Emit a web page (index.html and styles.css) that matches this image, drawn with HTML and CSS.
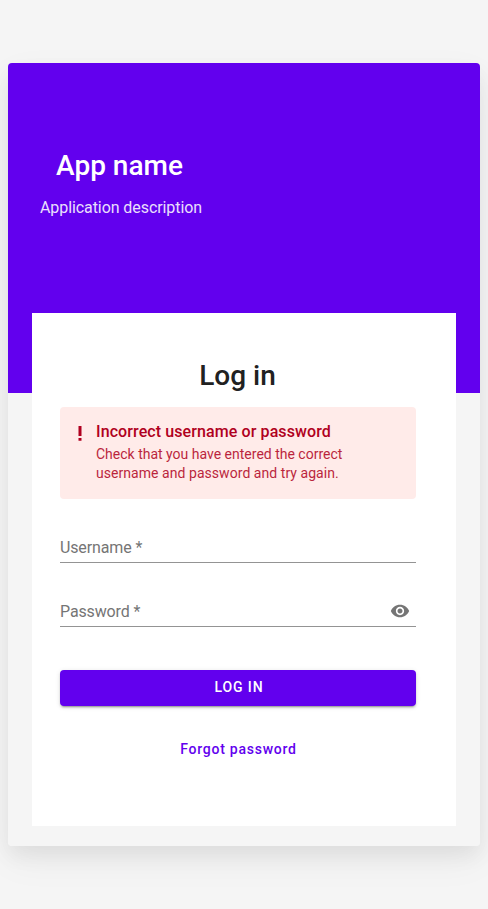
FILE: index.html
```html
<!DOCTYPE html>
<html lang="en">
<head>
<meta charset="utf-8">
<title>Log in</title>
<link rel="stylesheet" href="styles.css">
</head>
<body>
<main class="card">
  <header class="brand">
    <h1 class="brand-name">App name</h1>
    <p class="brand-text">Application description</p>
  </header>
  <form class="panel">
    <h2 class="title">Log in</h2>
    <div class="alert">
      <svg class="alert-icon" viewBox="0 0 20 20"><path d="M8.500 2h3v10h-3zM8.500 14h3v2.700h-3z"/></svg>
      <div>
        <div class="alert-title">Incorrect username or password</div>
        <div class="alert-text">Check that you have entered the correct<br><span class="alert-line">username and password and try again.</span></div>
      </div>
    </div>
    <div class="field"><span>Username *</span></div>
    <div class="field"><span>Password *</span>
      <svg class="eye" viewBox="0 0 24 24"><path d="M12 4.500C7 4.500 2.730 7.610 1 12c1.730 4.390 6 7.500 11 7.500s9.270-3.110 11-7.500c-1.730-4.390-6-7.500-11-7.500zM12 17c-2.760 0-5-2.240-5-5s2.240-5 5-5 5 2.240 5 5-2.240 5-5 5zm0-8c-1.660 0-3 1.340-3 3s1.340 3 3 3 3-1.340 3-3-1.340-3-3-3z"/></svg>
    </div>
    <button class="submit" type="button">LOG IN</button>
    <a class="forgot">Forgot password</a>
  </form>
</main>
</body>
</html>
```
FILE: styles.css
```css
* { box-sizing: border-box; }
body {
  margin: 0;
  height: 909px;
  overflow: hidden;
  padding: 63px 8px;
  background: #f5f5f5;
  font-family: Roboto, sans-serif;
}
.card {
  height: 783px;
  border-radius: 4px;
  background: linear-gradient(#6200ee 330px, #f5f5f5 330px);
  box-shadow: 0 10px 20px rgba(0,0,0,.06), 0 14px 38px rgba(0,0,0,.05);
}
.brand { height: 250px; padding: 86px 32px 0; color: #fff; }
.brand-name {
  width: 159px;
  margin: 0;
  text-align: center;
  font-size: 28px;
  line-height: 34px;
  font-weight: 500;
}
.brand-text { margin: 13px 0 0; font-size: 16px; line-height: 24px; letter-spacing: -.08px; opacity: .87; }
.panel {
  display: flex;
  flex-direction: column;
  height: 513px;
  margin: 0 24px;
  padding: 45px 40px 0 28px;
  background: #fff;
}
.title {
  margin: 0 1px 13px 0;
  text-align: center;
  font-size: 28px;
  line-height: 36px;
  font-weight: 500;
  color: #212121;
}
.alert {
  display: flex;
  gap: 6px;
  height: 92px;
  padding: 15px 20px 0 10px;
  border-radius: 4px;
  background: #ffebe9;
  color: #b00020;
}
.alert-icon { flex: none; width: 20px; height: 20px; margin-top: 2px; fill: currentColor; }
.alert-title { font-size: 16px; line-height: 20px; font-weight: 500; letter-spacing: .1px; }
.alert-text { margin-top: 3px; font-size: 14px; line-height: 19px; opacity: .85; }
.alert-line { letter-spacing: .05px; }
.field {
  display: flex;
  justify-content: space-between;
  align-items: center;
  height: 32px;
  margin-top: 32px;
  padding: 2px 6px 0 0;
  border-bottom: 1px solid #949494;
  font-size: 16px;
  letter-spacing: -.13px;
  color: #757575;
}
.eye { width: 20px; height: 20px; margin-bottom: 1px; fill: #757575; }
.submit {
  height: 36px;
  padding: 0 0 2px 2px;
  margin-top: 43px;
  border: 0;
  border-radius: 4px;
  background: #6200ee;
  color: #fff;
  box-shadow: 0 3px 1px -2px rgba(0,0,0,.2), 0 2px 2px rgba(0,0,0,.14), 0 1px 5px rgba(0,0,0,.12);
  font: 500 14px/34px Roboto, sans-serif;
  letter-spacing: .9px;
}
.forgot {
  margin-top: 33px;
  padding-left: 1px;
  text-align: center;
  color: #6200ee;
  font-size: 14px;
  line-height: 20px;
  font-weight: 500;
  letter-spacing: .75px;
}
```
